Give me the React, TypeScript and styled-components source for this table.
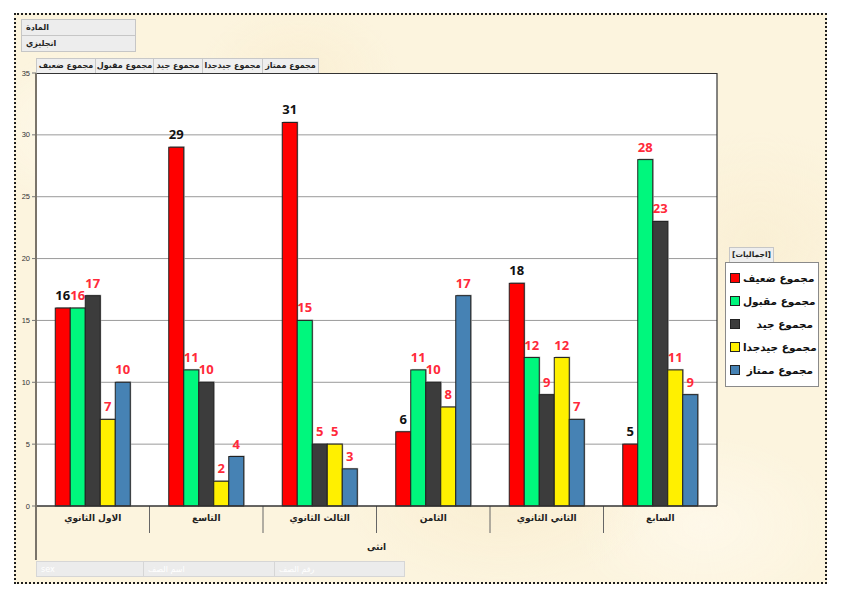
import React from 'react'
import styled, { createGlobalStyle } from 'styled-components'

const GlobalStyle = createGlobalStyle`
    body {
        margin: 0;
        background: #ffffff;
        font-family: "DejaVu Sans", "Liberation Sans", sans-serif;
    }
`;

const series = [
    { name: 'مجموع ضعيف', color: '#ff0000', label: '#111111' },
    { name: 'مجموع مقبول', color: '#00f77d', label: '#ff2a3a' },
    { name: 'مجموع جيد', color: '#3c3c3c', label: '#ff2a3a' },
    { name: 'مجموع جيدجدا', color: '#fff000', label: '#ff2a3a' },
    { name: 'مجموع ممتاز', color: '#4682b4', label: '#ff2a3a' },
];

const groups = [
    { name: 'الاول الثانوي', values: [16, 16, 17, 7, 10] },
    { name: 'التاسع', values: [29, 11, 10, 2, 4] },
    { name: 'الثالث الثانوي', values: [31, 15, 5, 5, 3] },
    { name: 'الثامن', values: [6, 11, 10, 8, 17] },
    { name: 'الثاني الثانوي', values: [18, 12, 9, 12, 7] },
    { name: 'السابع', values: [5, 28, 23, 11, 9] },
];

const tabs = [
    { text: 'مجموع ضعيف', w: 60 },
    { text: 'مجموع مقبول', w: 58 },
    { text: 'مجموع جيد', w: 49 },
    { text: 'مجموع جيدجدا', w: 60 },
    { text: 'مجموع ممتاز', w: 56 },
];

const bottomFields = [
    { text: 'sex', w: 108 },
    { text: 'اسم الصف', w: 131 },
    { text: 'رقم الصف', w: 130 },
];

// plot geometry (svg coords)
const plotL = 20;
const plotW = 681;
const plotH = 433;
const groupW = plotW / 6;
const barW = 15;
const scale = plotH / 35;

function Chart() {
    const ticks = [0, 5, 10, 15, 20, 25, 30, 35];
    return (
        <ChartSvg width={705} height={488} viewBox="0 0 705 488">
            <rect x={plotL} y={0} width={plotW} height={plotH} fill="#ffffff" />
            {ticks.map(t => {
                const y = plotH - t * scale;
                return (
                    <g key={t}>
                        {t > 0 && t < 35 && (
                            <line x1={plotL} x2={plotL + plotW} y1={y} y2={y} stroke="#9a9a9a" strokeWidth={1} />
                        )}
                        <line x1={plotL - 4} x2={plotL} y1={y} y2={y} stroke="#777" strokeWidth={1} />
                        <text x={plotL - 6} y={y + 2.5} fontSize={7.5} fill="#333" textAnchor="end"
                            fontFamily="Liberation Sans, sans-serif">{t}</text>
                    </g>
                );
            })}
            <line x1={plotL} x2={plotL + plotW} y1={0.5} y2={0.5} stroke="#333" strokeWidth={1} />
            <line x1={plotL + plotW} x2={plotL + plotW} y1={0} y2={plotH} stroke="#333" strokeWidth={1.2} />
            {groups.map((g, gi) => (
                <g key={g.name}>
                    {g.values.map((v, si) => {
                        const x = plotL + gi * groupW + (groupW - barW * 5) / 2 + si * barW;
                        const h = v * scale;
                        return (
                            <g key={si}>
                                <rect x={x + 1} y={plotH - h - 1} width={barW} height={h} fill="#b0b0b0" />
                                <rect x={x} y={plotH - h} width={barW} height={h}
                                    fill={series[si].color} stroke="#222" strokeWidth={1} />
                                <text x={x + barW / 2} y={plotH - h - 8} textAnchor="middle"
                                    fontSize={13} fontWeight={700} fill={series[si].label}
                                    fontFamily="Open Sans, sans-serif">{v}</text>
                            </g>
                        );
                    })}
                    {gi > 0 && (
                        <line x1={plotL + gi * groupW} x2={plotL + gi * groupW} y1={plotH} y2={plotH + 27}
                            stroke="#666" strokeWidth={1} />
                    )}
                    <text x={plotL + gi * groupW + groupW / 2} y={plotH + 15} textAnchor="middle"
                        fontSize={9} fontWeight={700} fill="#222" direction="rtl">{g.name}</text>
                </g>
            ))}
            <line x1={plotL} x2={plotL + plotW} y1={plotH} y2={plotH} stroke="#333" strokeWidth={1.5} />
            <line x1={plotL} x2={plotL} y1={0} y2={487} stroke="#7a746a" strokeWidth={2} />
            <text x={plotL + plotW / 2} y={plotH + 44} textAnchor="middle" fontSize={9}
                fontWeight={700} fill="#222" direction="rtl">انثى</text>
        </ChartSvg>
    );
}

function App() {
    return (
        <>
            <GlobalStyle />
            <Frame>
                <FieldBox>
                    <FieldRow>المادة</FieldRow>
                    <FieldRow>انجليزي</FieldRow>
                </FieldBox>
                <MainRow>
                    <ChartColumn>
                        <TabRow>
                            {tabs.map(t => (
                                <Tab key={t.text} $w={t.w}>{t.text}</Tab>
                            ))}
                        </TabRow>
                        <Chart />
                        <BottomRow>
                            {bottomFields.map(f => (
                                <BottomField key={f.text} $w={f.w}>{f.text}</BottomField>
                            ))}
                        </BottomRow>
                    </ChartColumn>
                    <Legend>
                        <LegendTitle>[اجماليات]</LegendTitle>
                        <LegendBox>
                            {series.map(s => (
                                <LegendItem key={s.name}>
                                    <Swatch $color={s.color} />
                                    <LegendText>{s.name}</LegendText>
                                </LegendItem>
                            ))}
                        </LegendBox>
                    </Legend>
                </MainRow>
            </Frame>
        </>
    );
}

const Frame = styled.div`
    box-sizing: border-box;
    margin: 13px 0 0 14px;
    width: 813px;
    height: 571px;
    border: 2px dotted #1e1e1e;
    padding-top: 4px;
    background-color: #fcf4de;
    background-image:
        radial-gradient(ellipse 120px 80px at 10% 20%, rgba(255,252,242,0.7), transparent),
        radial-gradient(ellipse 160px 90px at 60% 85%, rgba(247,233,200,0.5), transparent),
        radial-gradient(ellipse 140px 110px at 92% 40%, rgba(248,235,204,0.5), transparent),
        radial-gradient(ellipse 100px 70px at 35% 10%, rgba(248,234,202,0.5), transparent),
        radial-gradient(ellipse 130px 90px at 85% 90%, rgba(255,250,238,0.7), transparent);
`;

const FieldBox = styled.div`
    display: flex;
    flex-direction: column;
    margin-left: 5px;
    width: 113px;
    border: 1px solid #c6c6c6;
    background: #ededed;
`;

const FieldRow = styled.div`
    height: 15px;
    line-height: 15px;
    padding-left: 4px;
    font-size: 8px;
    font-weight: 700;
    color: #222;
    & + & {
        border-top: 1px solid #c6c6c6;
    }
`;

const MainRow = styled.div`
    display: flex;
    margin-top: 6px;
`;

const ChartColumn = styled.div`
    display: flex;
    flex-direction: column;
    width: 705px;
`;

const TabRow = styled.div`
    display: flex;
    margin-left: 20px;
    height: 15px;
`;

const Tab = styled.div<{ $w: number }>`
    box-sizing: border-box;
    width: ${p => p.$w}px;
    height: 15px;
    line-height: 14px;
    text-align: center;
    background: #efefef;
    border: 1px solid #c8c8c8;
    border-bottom: none;
    font-size: 8px;
    font-weight: 700;
    color: #222;
    white-space: nowrap;
    & + & {
        border-left: none;
    }
`;

const ChartSvg = styled.svg`
    display: block;
    overflow: visible;
`;

const BottomRow = styled.div`
    display: flex;
    margin-left: 20px;
`;

const BottomField = styled.div<{ $w: number }>`
    box-sizing: border-box;
    width: ${p => p.$w}px;
    height: 16px;
    line-height: 15px;
    padding-left: 4px;
    background: #ececec;
    border: 1px solid #d6d6d6;
    font-size: 8px;
    color: #ffffff;
    & + & {
        border-left: none;
    }
`;

const Legend = styled.div`
    display: flex;
    flex-direction: column;
    align-items: flex-start;
    margin-left: 4px;
    margin-top: 189px;
`;

const LegendTitle = styled.div`
    margin-left: 4px;
    height: 14px;
    line-height: 14px;
    padding: 0 2px;
    background: #eeeeee;
    border: 1px solid #c6c6c6;
    border-bottom: none;
    font-size: 7.5px;
    font-weight: 700;
    color: #222;
`;

const LegendBox = styled.div`
    box-sizing: border-box;
    width: 94px;
    height: 125px;
    padding: 3px 5px 4px 4px;
    display: flex;
    flex-direction: column;
    justify-content: space-around;
    background: #ffffff;
    border: 1px solid #8a8a8a;
`;

const LegendItem = styled.div`
    display: flex;
    align-items: center;
    justify-content: space-between;
    gap: 3px;
`;

const Swatch = styled.div<{ $color: string }>`
    flex: none;
    width: 8px;
    height: 8px;
    background: ${p => p.$color};
    border: 1px solid #222;
`;

const LegendText = styled.div`
    font-size: 10.5px;
    font-weight: 700;
    color: #111;
    direction: rtl;
    white-space: nowrap;
`;

export default App
